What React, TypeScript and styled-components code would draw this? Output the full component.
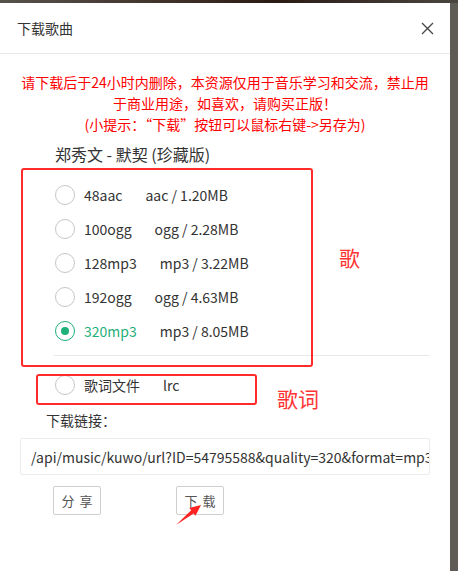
import React from 'react';
import styled, { createGlobalStyle } from 'styled-components';

const GlobalStyle = createGlobalStyle`
  html, body {
    margin: 0;
    padding: 0;
    background: #5f5b56;
  }
  body {
    font-family: "Noto Sans CJK SC", "Noto Sans", sans-serif;
    color: #333;
  }
`;

const Page = styled.div`
  min-height: 100vh;
  display: flex;
  flex-direction: column;
`;

const TopStrip = styled.div`
  height: 3px;
  background: linear-gradient(90deg, #57524c 0%, #3a2a22 45%, #2b1a14 60%, #4a4540 100%);
`;

const Dialog = styled.div`
  position: relative;
  width: 450px;
  flex: 1;
  background: #fff;
`;

const Header = styled.div`
  height: 50px;
  display: flex;
  align-items: center;
  justify-content: space-between;
  padding: 0 17px;
  border-bottom: 1px solid #e8e8e8;
`;

const Title = styled.div`
  font-size: 14px;
  color: #333;
`;

const CloseButton = styled.button`
  border: none;
  background: none;
  padding: 0;
  margin-right: -1px;
  width: 14px;
  height: 14px;
  display: flex;
  align-items: center;
  justify-content: center;
  cursor: pointer;
`;

const Body = styled.div`
  padding: 18px 20px 0;
`;

const Notice = styled.div`
  color: #ff0000;
  font-size: 14px;
  line-height: 21px;
  text-align: center;
  white-space: nowrap;
`;

const SongTitle = styled.div`
  margin-top: 8px;
  padding-left: 35px;
  font-size: 16px;
  line-height: 22px;
  color: #333;
`;

const OptionList = styled.div`
  margin-top: 13px;
  padding-left: 35px;
`;

const OptionRow = styled.label<{ $active?: boolean }>`
  height: 34px;
  display: flex;
  align-items: center;
  font-size: 14px;
  color: ${p => (p.$active ? '#1fb07a' : '#333')};
  cursor: pointer;
`;

const Radio = styled.span<{ $checked?: boolean }>`
  width: 20px;
  height: 20px;
  box-sizing: border-box;
  border-radius: 50%;
  border: 1.5px solid ${p => (p.$checked ? '#1fb07a' : '#c6c6c6')};
  display: flex;
  align-items: center;
  justify-content: center;
  margin-right: 9px;
  flex-shrink: 0;

  &::after {
    content: '';
    width: 8px;
    height: 8px;
    border-radius: 50%;
    background: #1fb07a;
    display: ${p => (p.$checked ? 'block' : 'none')};
  }
`;

const Meta = styled.span`
  margin-left: 23px;
  color: #333;
`;

const Divider = styled.div`
  margin: 7px 0 0 34px;
  height: 1px;
  background: #e8e8e8;
`;

const LyricList = styled(OptionList)`
  margin-top: 12px;
`;

const LinkLabel = styled.div`
  margin-top: 8px;
  padding-left: 26px;
  font-size: 14px;
  line-height: 20px;
  color: #333;
`;

const LinkInput = styled.input`
  display: block;
  margin-top: 8px;
  width: 100%;
  height: 37px;
  box-sizing: border-box;
  border: 1px solid #ececec;
  border-radius: 2px;
  padding: 0 0 0 10px;
  font-family: "Noto Sans CJK SC", "Noto Sans", sans-serif;
  font-size: 14px;
  color: #333;
  background: #fff;
  outline: none;
`;

const Actions = styled.div`
  margin-top: 11px;
  padding-left: 33px;
  display: flex;
  gap: 75px;
`;

const ActionButton = styled.button`
  width: 48px;
  height: 29px;
  box-sizing: border-box;
  border: 1px solid #cfcfcf;
  border-radius: 2px;
  background: #fff;
  color: #555;
  font-family: "Noto Sans CJK SC", "Noto Sans", sans-serif;
  font-size: 13px;
  letter-spacing: 5px;
  padding: 0 0 0 5px;
  cursor: pointer;
`;

/* red annotations drawn over the dialog */
const MarkBox = styled.div<{ $top: number; $left: number; $w: number; $h: number }>`
  position: absolute;
  top: ${p => p.$top}px;
  left: ${p => p.$left}px;
  width: ${p => p.$w}px;
  height: ${p => p.$h}px;
  box-sizing: border-box;
  border: 2px solid #ff2b2b;
  border-radius: 3px;
  pointer-events: none;
`;

const MarkText = styled.div<{ $top: number; $left: number }>`
  position: absolute;
  top: ${p => p.$top}px;
  left: ${p => p.$left}px;
  font-size: 21px;
  line-height: 26px;
  color: #ff3333;
  pointer-events: none;
`;

const Arrow = styled.svg`
  position: absolute;
  top: 497px;
  left: 170px;
  pointer-events: none;
`;

const options = [
  { name: '48aac', meta: 'aac / 1.20MB' },
  { name: '100ogg', meta: 'ogg / 2.28MB' },
  { name: '128mp3', meta: 'mp3 / 3.22MB' },
  { name: '192ogg', meta: 'ogg / 4.63MB' },
  { name: '320mp3', meta: 'mp3 / 8.05MB' },
];

const App: React.FC = () => {
  const selected = '320mp3';

  return (
    <Page>
      <GlobalStyle />
      <TopStrip />
      <Dialog>
        <Header>
          <Title>下载歌曲</Title>
          <CloseButton aria-label="close">
            <svg width="13" height="13" viewBox="0 0 13 13">
              <path d="M1 1L12 12M12 1L1 12" stroke="#444" strokeWidth="1.3" />
            </svg>
          </CloseButton>
        </Header>

        <Body>
          <Notice>
            请下载后于24小时内删除，本资源仅用于音乐学习和交流，禁止用
            <br />
            于商业用途，如喜欢，请购买正版！
            <br />
            (小提示：“下载”按钮可以鼠标右键-&gt;另存为)
          </Notice>

          <SongTitle>郑秀文 - 默契 (珍藏版)</SongTitle>

          <OptionList>
            {options.map(o => (
              <OptionRow key={o.name} $active={o.name === selected}>
                <Radio $checked={o.name === selected} />
                <span>{o.name}</span>
                <Meta>{o.meta}</Meta>
              </OptionRow>
            ))}
          </OptionList>

          <Divider />

          <LyricList>
            <OptionRow>
              <Radio />
              <span>歌词文件</span>
              <Meta>lrc</Meta>
            </OptionRow>
          </LyricList>

          <LinkLabel>下载链接：</LinkLabel>
          <LinkInput readOnly value="/api/music/kuwo/url?ID=54795588&quality=320&format=mp3" />

          <Actions>
            <ActionButton>分享</ActionButton>
            <ActionButton>下载</ActionButton>
          </Actions>
        </Body>

        <MarkBox $top={165} $left={21} $w={292} $h={199} />
        <MarkBox $top={371} $left={36} $w={221} $h={31} />
        <MarkText $top={241} $left={339}>歌</MarkText>
        <MarkText $top={382} $left={277}>歌词</MarkText>
        <Arrow width="36" height="32" viewBox="0 0 36 32">
          <polygon
            points="6,25 21.2,10.2 19.3,7.9 31,5 25.5,15.7 23.6,13.4"
            fill="#ff2222"
          />
        </Arrow>
      </Dialog>
    </Page>
  );
};

export default App;
